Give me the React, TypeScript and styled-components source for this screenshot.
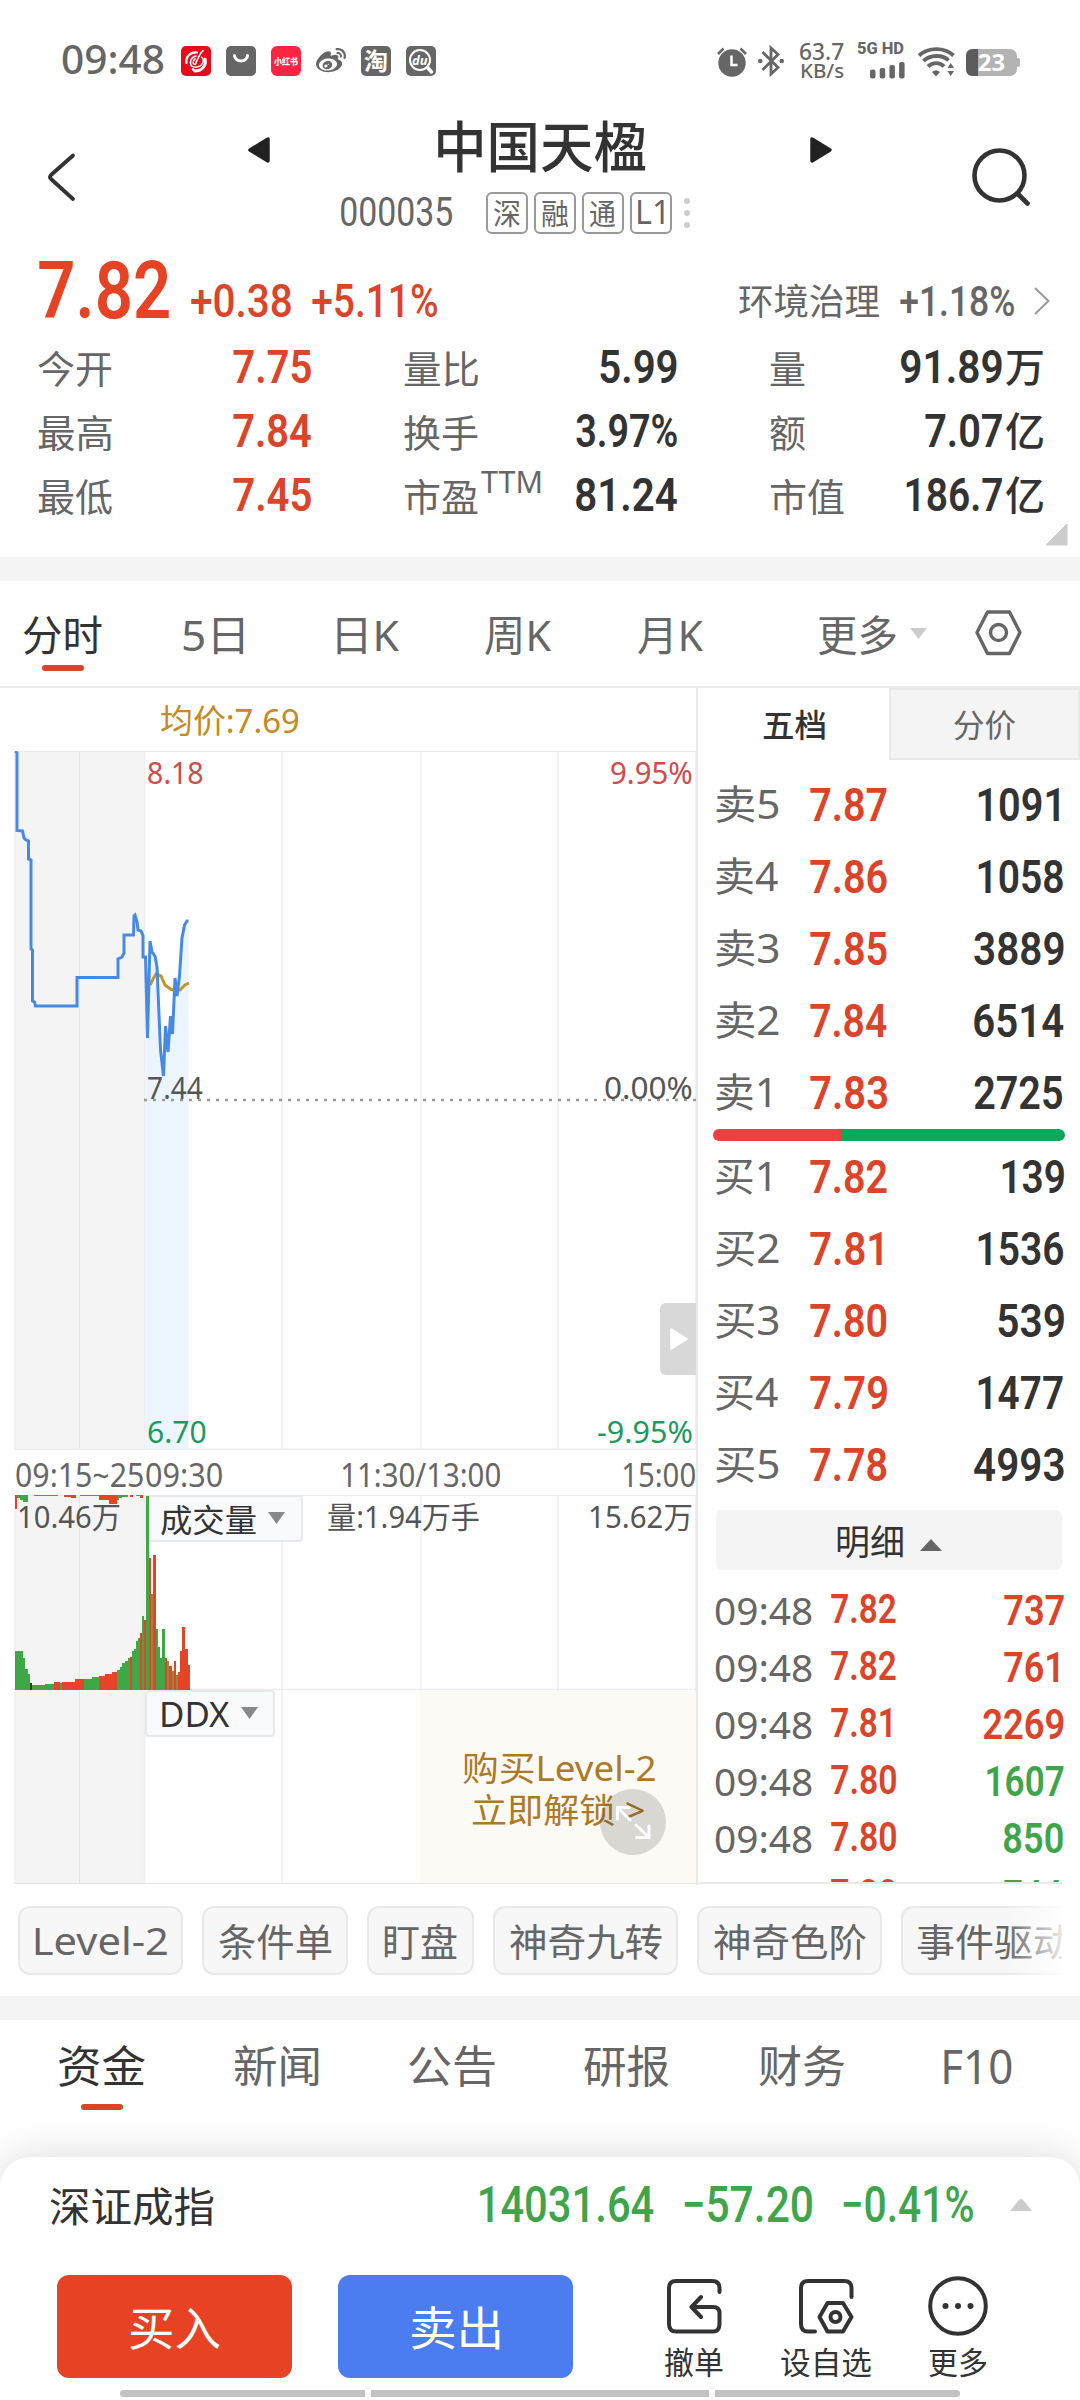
import React, { useLayoutEffect, useRef, useState } from 'react';
import styled, { createGlobalStyle, css } from 'styled-components';
import { FaWeibo } from 'react-icons/fa';

const RED = '#dc4429';
const GREEN = '#3fa54a';
const INK = '#333333';
const GREY = '#666666';
const LINE = '#e9e9e9';

const DIN = 'Roboto, "Noto Sans CJK SC", sans-serif';
const UI = '"Noto Sans", "Noto Sans CJK SC", sans-serif';

const Global = createGlobalStyle`
  * { box-sizing: border-box; }
  body { margin: 0; background: #fff; font-family: ${UI}; }
`;

/* ---------- text fitted to a column width ---------- */

const FitBox = styled.span<{ $w: number; $ml: number; $size: number }>`
  display: block;
  flex: none;
  width: ${(p) => p.$w}px;
  height: ${(p) => p.$size}px;
  margin-left: ${(p) => p.$ml}px;
`;

const FitInner = styled.span<{ $size: number; $weight: number; $din?: boolean; $color: string }>`
  display: block;
  width: max-content;
  white-space: nowrap;
  transform-origin: 0 50%;
  font-family: ${(p) => (p.$din ? DIN : UI)};
  font-size: ${(p) => p.$size}px;
  line-height: ${(p) => p.$size}px;
  font-weight: ${(p) => p.$weight};
  color: ${(p) => p.$color};
`;

type FitProps = {
  children: string;
  w: number;
  size: number;
  ml?: number;
  dy?: number;
  weight?: number;
  din?: boolean;
  color?: string;
};

function Fit({ children, w, size, ml = 0, dy = 0, weight = 400, din, color = GREY }: FitProps) {
  const ref = useRef<HTMLSpanElement>(null);
  const [fit, setFit] = useState({ s: 1, x: 0 });
  useLayoutEffect(() => {
    const ctx = document.createElement('canvas').getContext('2d');
    if (!ctx || !ref.current) return;
    ctx.font = `${weight} ${size}px ${din ? DIN : UI}`;
    const m = ctx.measureText(children);
    const ink = m.actualBoundingBoxLeft + m.actualBoundingBoxRight;
    if (ink > 0) setFit({ s: w / ink, x: m.actualBoundingBoxLeft });
  }, [children, w, size, weight, din]);
  return (
    <FitBox $w={w} $ml={ml} $size={size}>
      <FitInner
        ref={ref}
        $size={size}
        $weight={weight}
        $din={din}
        $color={color}
        style={{ transform: `translateY(${dy}px) scaleX(${fit.s}) translateX(${fit.x}px)` }}
      >
        {children}
      </FitInner>
    </FitBox>
  );
}

/* ---------- shared ---------- */

const Page = styled.div`
  width: 1080px;
  height: 2400px;
  overflow: hidden;
  background: #fff;
  display: flex;
  flex-direction: column;
`;

const Band = styled.div`
  flex: none;
  height: 24px;
  background: #f4f4f4;
`;

const Glyph = styled.svg<{ $ml?: number; $mt?: number }>`
  display: block;
  flex: none;
  overflow: visible;
  margin-left: ${(p) => p.$ml || 0}px;
  margin-top: ${(p) => p.$mt || 0}px;
`;

/* ---------- status bar ---------- */

const StatusBar = styled.header`
  flex: none;
  height: 120px;
  display: flex;
  align-items: center;
  padding-left: 62px;
`;

const AppIcons = styled.div`
  display: flex;
  gap: 15px;
  margin-left: 17px;
  margin-top: 2px;
  color: ${GREY};
`;

const Stack = styled.div<{ $ml: number; $gap?: number }>`
  display: flex;
  flex-direction: column;
  gap: ${(p) => p.$gap || 0}px;
  margin-left: ${(p) => p.$ml}px;
`;

function Status() {
  return (
    <StatusBar>
      <Fit w={102} size={40} weight={500} dy={-1}>09:48</Fit>
      <AppIcons>
        <Glyph width="30" height="30" viewBox="0 0 30 30">
          <rect width="30" height="30" rx="5" fill="#e80a1a" />
          <g fill="none" stroke="#fff" strokeLinecap="round">
            <path d="M16 6.500C9 6 4.500 11 5.500 17" strokeWidth="2.200" />
            <path d="M15 10C10 11 8 16 10.500 20" strokeWidth="1.600" />
            <path d="M22 4.500C18 9 16 14 14.500 18C12 19.500 11 15 14 13" strokeWidth="1.600" />
            <path d="M20.500 11C24 14 22 20 16 21C13.500 21.500 12 21 10.500 20" strokeWidth="1.500" />
            <path d="M24 13C26 19 21 25 14 25L12 23.500" strokeWidth="2.800" />
          </g>
        </Glyph>
        <Glyph width="30" height="30" viewBox="0 0 30 30">
          <rect width="30" height="30" rx="5" fill={GREY} />
          <path d="M8.500 9.500a6.500 5.500 0 0 0 13 0" fill="none" stroke="#fff" strokeWidth="3" strokeLinecap="round" />
        </Glyph>
        <Glyph width="30" height="30" viewBox="0 0 30 30">
          <rect width="30" height="30" rx="6" fill="#fb2442" />
          <text x="15" y="18.500" fontSize="9" fontWeight="900" textAnchor="middle" textLength="24" lengthAdjust="spacingAndGlyphs" fill="#fff" fontFamily="Noto Sans CJK SC">小红书</text>
        </Glyph>
        <FaWeibo size={30} />
        <Glyph width="30" height="30" viewBox="0 0 30 30">
          <rect width="30" height="30" rx="5" fill={GREY} />
          <text x="15" y="24" fontSize="24" fontWeight="700" textAnchor="middle" fill="#fff" fontFamily="Noto Sans CJK SC">淘</text>
        </Glyph>
        <Glyph width="30" height="30" viewBox="0 0 30 30">
          <rect width="30" height="30" rx="5" fill={GREY} />
          <circle cx="14" cy="14" r="10" fill="none" stroke="#fff" strokeWidth="2" />
          <path d="M21.500 21.500L25.500 26" stroke="#fff" strokeWidth="3.500" strokeLinecap="round" />
          <text x="13.700" y="18.500" fontSize="13" fontWeight="700" fontStyle="italic" textAnchor="middle" fill="#fff" fontFamily="Noto Sans">du</text>
        </Glyph>
      </AppIcons>
      <Glyph $ml={281} $mt={3} width="30" height="30" viewBox="0 0 30 30">
        <circle cx="15" cy="16" r="13.700" fill={GREY} />
        <path d="M1 7L6.500 1.500M29 7L23.500 1.500" stroke={GREY} strokeWidth="2.500" />
        <path d="M14.500 8.500V18H20.500" fill="none" stroke="#fff" strokeWidth="2.500" />
      </Glyph>
      <Glyph $ml={11} $mt={2} width="26" height="30" viewBox="0 0 26 30">
        <path d="M4.500 6L20 21.500L13 28V2L20 8.500L4.500 24" fill="none" stroke={GREY} strokeWidth="2.800" />
        <circle cx="2.300" cy="15" r="2.300" fill={GREY} />
        <circle cx="23.700" cy="15" r="2.300" fill={GREY} />
      </Glyph>
      <Stack $ml={16}>
        <Fit w={44} size={23} weight={500} dy={1}>63.7</Fit>
        <Fit w={43} size={19} weight={500} ml={1}>KB/s</Fit>
      </Stack>
      <Stack $ml={13} $gap={4}>
        <Fit w={47} size={17} weight={800} din dy={-1}>5G HD</Fit>
        <Glyph $ml={13} width="35" height="17" viewBox="0 0 35 17">
          <rect x="0" y="7.500" width="5.500" height="9" rx="2" fill={GREY} />
          <rect x="9.700" y="6" width="5.500" height="10.500" rx="2" fill={GREY} />
          <rect x="19.400" y="3" width="5.500" height="13.500" rx="2" fill={GREY} />
          <rect x="29.100" y="0" width="5.500" height="16.500" rx="2" fill={GREY} />
        </Glyph>
      </Stack>
      <Glyph $ml={13} $mt={3} width="37" height="30" viewBox="0 0 37 30">
        <g fill="none" stroke={GREY} strokeWidth="3.900">
          <path d="M1 8.500C10.500 0 26.500 0 35.500 8.500" />
          <path d="M5.500 14C12 7.500 25 7.500 30.500 13.500" />
          <path d="M10 19.500C14.500 15 22 15 26 19.500" />
        </g>
        <path d="M14 25Q18 21.500 22 25L18 29.500Z" fill={GREY} />
        <path d="M29.500 21L32.700 16L36 21ZM29.500 24L32.700 29L36 24Z" fill={GREY} />
      </Glyph>
      <Glyph $ml={11} $mt={5} width="54" height="27" viewBox="0 0 54 27">
        <rect x="0" y="0" width="51" height="27" rx="7" fill="#b3b3b3" />
        <path d="M50 9h2q2 0 2 2v5q0 2-2 2h-2z" fill="#b3b3b3" />
        <path d="M12 0H7Q0 0 0 7V20Q0 27 7 27H12Z" fill="#5c5c5c" />
        <text x="25.500" y="22" fontSize="24" fontWeight="700" textAnchor="middle" fill="#fff" fontFamily="Noto Sans">23</text>
      </Glyph>
    </StatusBar>
  );
}

/* ---------- title ---------- */

const TitleBar = styled.div`
  flex: none;
  height: 130px;
  display: flex;
  align-items: flex-start;
`;

const TitleBlock = styled.div`
  width: 350px;
  margin-left: 71px;
  display: flex;
  flex-direction: column;
`;

const CodeRow = styled.div`
  display: flex;
  align-items: center;
  height: 42px;
  margin-top: 17px;
`;

const Badge = styled.span<{ $first?: boolean }>`
  width: 42px;
  height: 42px;
  flex: none;
  margin-left: ${(p) => (p.$first ? 34 : 6)}px;
  border: 2px solid #999;
  border-radius: 6px;
  display: flex;
  align-items: center;
  justify-content: center;
`;

function Title() {
  return (
    <TitleBar>
      <Glyph $ml={48} $mt={34} width="27" height="46" viewBox="0 0 27 46">
        <path d="M25 1.500L3 21Q1 23 3 25L25 45" fill="none" stroke={INK} strokeWidth="3.800" strokeLinecap="round" />
      </Glyph>
      <Glyph $ml={173} $mt={17} width="22" height="26" viewBox="0 0 22 26">
        <path d="M20 2V24L2 13Z" fill="#222" stroke="#222" strokeWidth="3.500" strokeLinejoin="round" />
      </Glyph>
      <TitleBlock>
        <Fit w={208} size={55} ml={97} weight={500} color={INK} dy={-2}>中国天楹</Fit>
        <CodeRow>
          <Fit w={111} size={40} din weight={450}>000035</Fit>
          <Badge $first><Fit w={26} size={29}>深</Fit></Badge>
          <Badge><Fit w={26} size={29}>融</Fit></Badge>
          <Badge><Fit w={26} size={29}>通</Fit></Badge>
          <Badge><Fit w={26} size={32} dy={-1}>L1</Fit></Badge>
          <Glyph $ml={12} width="6" height="30" viewBox="0 0 6 30" fill="#ccc">
            <circle cx="3" cy="3" r="3" />
            <circle cx="3" cy="15" r="3" />
            <circle cx="3" cy="27" r="3" />
          </Glyph>
        </CodeRow>
      </TitleBlock>
      <Glyph $ml={119} $mt={17} width="22" height="26" viewBox="0 0 22 26">
        <path d="M2 2V24L20 13Z" fill="#222" stroke="#222" strokeWidth="3.500" strokeLinejoin="round" />
      </Glyph>
      <Glyph $ml={140} $mt={28} width="58" height="58" viewBox="0 0 58 58">
        <circle cx="27.500" cy="27.500" r="25" fill="none" stroke={INK} strokeWidth="4.600" />
        <path d="M46 46L55.500 55.500" stroke={INK} strokeWidth="4.600" strokeLinecap="round" />
      </Glyph>
    </TitleBar>
  );
}

/* ---------- quote ---------- */

const QuoteRow = styled.div`
  flex: none;
  height: 84px;
  display: flex;
  align-items: center;
  padding-left: 39px;
`;

const StatsGrid = styled.div`
  flex: none;
  height: 223px;
  padding-left: 38px;
  position: relative;
  display: grid;
  grid-template-columns: repeat(3, 273px);
  grid-auto-rows: 64px;
  column-gap: 93px;
`;

const Stat = styled.div`
  display: flex;
  align-items: center;
`;

const Corner = styled.svg`
  position: absolute;
  left: 1045px;
  top: 189px;
`;

const Push = styled.span`
  flex: 1;
`;

type StatDef = { label: string; lw: number; value: string; vw: number; unit?: string; up?: boolean; sup?: boolean };

const stats: StatDef[] = [
  { label: '今开', lw: 74, value: '7.75', vw: 78, up: true },
  { label: '量比', lw: 74, value: '5.99', vw: 77 },
  { label: '量', lw: 35, value: '91.89', vw: 101, unit: '万' },
  { label: '最高', lw: 74, value: '7.84', vw: 78, up: true },
  { label: '换手', lw: 74, value: '3.97%', vw: 101 },
  { label: '额', lw: 35, value: '7.07', vw: 77, unit: '亿' },
  { label: '最低', lw: 74, value: '7.45', vw: 78, up: true },
  { label: '市盈', lw: 74, value: '81.24', vw: 101, sup: true },
  { label: '市值', lw: 74, value: '186.7', vw: 96, unit: '亿' },
];

function Quote() {
  return (
    <>
      <QuoteRow>
        <Fit w={130} size={80} din weight={600} color="#e64325" dy={-1}>7.82</Fit>
        <Fit w={100} size={46} ml={22} din weight={500} color={RED} dy={9}>+0.38</Fit>
        <Fit w={125} size={46} ml={21} din weight={500} color={RED} dy={9}>+5.11%</Fit>
        <Fit w={140} size={36} ml={302} dy={10}>环境治理</Fit>
        <Fit w={114} size={43} ml={21} din weight={500} dy={9}>+1.18%</Fit>
        <Glyph $ml={20} $mt={18} width="16" height="28" viewBox="0 0 16 28">
          <path d="M1 1L14.500 14L1 27" fill="none" stroke="#999" strokeWidth="2" />
        </Glyph>
      </QuoteRow>
      <StatsGrid>
        {stats.map((s) => (
          <Stat key={s.label}>
            <Fit w={s.lw} size={38} dy={2}>{s.label}</Fit>
            {s.sup && <Fit w={60} size={31} ml={3} dy={-13}>TTM</Fit>}
            <Push />
            <Fit w={s.vw} size={47} din weight={600} color={s.up ? RED : INK}>{s.value}</Fit>
            {s.unit && <Fit w={37} size={40} ml={4} weight={500} color={INK} dy={1}>{s.unit}</Fit>}
          </Stat>
        ))}
        <Corner width="23" height="23" viewBox="0 0 23 23">
          <path d="M22 1V22H1Z" fill="#ccc" stroke="#ccc" strokeLinejoin="round" />
        </Corner>
      </StatsGrid>
    </>
  );
}

/* ---------- period tabs ---------- */

const Periods = styled.nav`
  flex: none;
  height: 107px;
  display: flex;
  border-bottom: 2px solid ${LINE};
`;

const Tab = styled.div<{ $ml: number; $pt: number }>`
  display: flex;
  flex-direction: column;
  align-items: center;
  margin-left: ${(p) => p.$ml}px;
  padding-top: ${(p) => p.$pt}px;
`;

const Underline = styled.i<{ $mt: number }>`
  width: 42px;
  height: 6px;
  margin-top: ${(p) => p.$mt}px;
  border-radius: 3px;
  background: ${RED};
`;

function PeriodTabs() {
  return (
    <Periods>
      <Tab $ml={23} $pt={33}>
        <Fit w={79} size={42} color={INK}>分时</Fit>
        <Underline $mt={9} />
      </Tab>
      <Tab $ml={81} $pt={33}><Fit w={60} size={42}>5日</Fit></Tab>
      <Tab $ml={94} $pt={33}><Fit w={62} size={42}>日K</Fit></Tab>
      <Tab $ml={86} $pt={33}><Fit w={66} size={42}>周K</Fit></Tab>
      <Tab $ml={87} $pt={33}><Fit w={65} size={42}>月K</Fit></Tab>
      <Tab $ml={115} $pt={33}><Fit w={78} size={42}>更多</Fit></Tab>
      <Glyph $ml={14} $mt={47} width="17" height="11" viewBox="0 0 17 11">
        <path d="M0 0H17L8.500 11Z" fill="#ccc" />
      </Glyph>
      <Glyph $ml={48} $mt={29} width="47" height="46" viewBox="0 0 47 46">
        <path d="M12.500 2H34.500L45 22.500L34.500 43.500H12.500L2 22.500Z" fill="none" stroke={GREY} strokeWidth="3.400" strokeLinejoin="round" />
        <circle cx="23.500" cy="22.500" r="8" fill="none" stroke={GREY} strokeWidth="3.400" />
      </Glyph>
    </Periods>
  );
}

/* ---------- charts ---------- */

const Main = styled.section`
  flex: none;
  height: 1197px;
  display: flex;
`;

const ChartCol = styled.div`
  width: 698px;
  flex: none;
  border-right: 2px solid ${LINE};
  display: flex;
  flex-direction: column;
`;

const AvgRow = styled.div`
  height: 63px;
  display: flex;
  align-items: center;
  padding-left: 161px;
`;

const Plot = styled.div<{ $h: number }>`
  position: relative;
  height: ${(p) => p.$h}px;
`;

const PlotArt = styled.svg`
  position: absolute;
  inset: 0;
`;

const Labels = styled.div`
  position: absolute;
  inset: 0;
  display: flex;
  flex-direction: column;
  justify-content: space-between;
`;

const LabelLine = styled.div<{ $top?: number; $bottom?: number }>`
  display: flex;
  justify-content: space-between;
  padding: ${(p) => p.$top || 0}px 4px ${(p) => p.$bottom || 0}px 148px;
`;

const Handle = styled.div`
  position: absolute;
  right: 0;
  top: 552px;
  width: 36px;
  height: 72px;
  border-radius: 6px 0 0 6px;
  background: #d8d8d8;
  display: flex;
  align-items: center;
  justify-content: center;
`;

const TimeRow = styled.div`
  height: 45px;
  display: flex;
  align-items: center;
  padding-left: 16px;
`;

const PanelHead = styled.div`
  position: relative;
  display: flex;
  align-items: center;
  height: 47px;
`;

const Picker = styled.div<{ $w: number; $ml: number }>`
  width: ${(p) => p.$w}px;
  height: 47px;
  flex: none;
  margin-left: ${(p) => p.$ml}px;
  border: 2px solid ${LINE};
  border-radius: 4px;
  background: #f9fafe;
  display: flex;
  align-items: center;
`;

const LockPanel = styled.div`
  position: absolute;
  left: 420px;
  right: 0;
  top: 1px;
  bottom: 1px;
  background: #fcfaf5;
  padding-top: 60px;
`;

const Zoom = styled.div`
  position: absolute;
  left: 180px;
  top: 98px;
  width: 66px;
  height: 66px;
  border-radius: 50%;
  background: rgba(40, 40, 40, 0.17);
`;

const priceLine: [number, number][] = [
  [15.5, 751], [17, 753], [17, 830.5], [22.5, 831], [24, 838], [26, 840], [28.5, 841], [28.5, 859], [31, 860],
  [31, 949], [32.5, 950], [32.5, 1001], [34.5, 1002], [35.5, 1006], [77, 1006], [77, 977.5], [118, 977.5],
  [118, 959], [122, 957], [124, 953], [124, 935], [133.5, 935], [134, 916], [135, 915], [137, 922], [138, 930],
  [141, 931], [143, 935.5], [143, 957], [145.5, 957], [147.5, 1038], [150, 941], [152, 952], [155, 956],
  [157, 967], [160.5, 1050], [163.5, 1076], [165.5, 1026], [168, 1052], [170.5, 1016], [172.5, 1034],
  [175, 978], [177, 996], [179.5, 976], [182, 938], [184.5, 925], [187, 921], [188.5, 921],
];
const toPoints = (pts: [number, number][]) => pts.map((p) => p.join(',')).join(' ');
const fillPoints = `${toPoints(priceLine.filter((p) => p[0] >= 145))} 188.500,1449 145.500,1449`;

const OLIVE = '#91893c';
const BR = '#e54527';
const BG = '#3fa846';
const bars: [number, number, number, string][] = [
  [15, 22.5, 1651, BG], [22.5, 24.5, 1658, BG], [24.5, 28, 1669, BG], [28, 30, 1674, BG], [29.5, 31.5, 1683, '#1d4a22'],
  [31.5, 45, 1684.5, BG], [45, 54, 1683.5, BG], [54, 60, 1682, BR], [60, 62, 1682.5, BG], [62, 75, 1681.5, BR],
  [75, 84, 1679, BR], [84, 92, 1678.5, BG], [92, 99, 1677, BG], [99, 105, 1675.5, BR], [105, 112, 1674, BR],
  [112, 117, 1672, BR], [117, 120, 1670, BG], [120, 122, 1667, BG], [122, 125, 1663, BG], [125, 128, 1661, BG],
  [128, 130, 1658, BG], [130, 132, 1656.5, BR], [132, 134, 1651, BG], [134, 136, 1649, BG], [136, 138, 1641, BG],
  [138, 140, 1638, BG], [140, 142, 1633, BR], [142, 144, 1616, BG], [144, 146, 1620, BR], [146, 149, 1496, BG],
  [149, 151, 1558, BR], [151, 153.2, 1594, OLIVE], [153.2, 155.7, 1555, BR], [155.7, 158, 1629, BG],
  [158, 160, 1647, BG], [160, 162, 1658, BG], [162, 165, 1629, BG], [165, 167, 1658, BR], [167, 169, 1661, OLIVE],
  [169, 171.5, 1666, BR], [171.5, 173.5, 1671, OLIVE], [173.5, 176, 1661, BR], [176, 178, 1675, OLIVE],
  [178, 180, 1672, BR], [180, 182.3, 1651, BR], [182.3, 185, 1627, BR], [185, 187.5, 1649, BR], [187.5, 190, 1665, BR],
];
const hanging: [number, number, number, string][] = [
  [15, 17, 1509, BR], [17, 20, 1498, BG], [20, 23, 1500, BG], [23, 28, 1502, BG], [34, 58, 1496, BG], [64, 71, 1496.5, BR], [71, 76, 1498, BR],
  [80, 99, 1496, BG], [99, 109, 1500, BR], [109, 117, 1504, BR], [117, 119, 1500, BG], [119, 122, 1498, BG], [122, 128, 1496.5, BG],
  [130, 133, 1496.5, BR], [136, 140, 1496, BG], [140, 143, 1498, BR],
];

const Grid = ({ y1, y2 }: { y1: number; y2: number }) => (
  <>
    <rect x="14.500" y={y1} width="130" height={y2 - y1} fill="#f4f4f4" />
    {[15, 144.5, 282, 421, 558].map((x) => (
      <line key={x} x1={x} x2={x} y1={y1} y2={y2} stroke="#efefef" strokeWidth="1.500" />
    ))}
    <line x1="79.500" x2="79.500" y1={y1} y2={y2} stroke="#e6e6e6" />
    <line x1="695.500" x2="695.500" y1={y1} y2={y2} stroke="#efefef" />
  </>
);

function Charts() {
  return (
    <ChartCol>
      <AvgRow><Fit w={138} size={33} dy={1} color="#c58a20">均价:7.69</Fit></AvgRow>
      <Plot $h={699}>
        <PlotArt width="696" height="699" viewBox="0 751 696 699">
          <Grid y1={751} y2={1450} />
          <line x1="14" x2="696" y1="751.500" y2="751.500" stroke="#e9e9e9" />
          <line x1="14" x2="696" y1="1449.300" y2="1449.300" stroke="#ececec" strokeWidth="1.500" />
          <polygon points={fillPoints} fill="#ecf4fd" />
          <polyline points="150,985 153,979 156,974 161,976 165,985 171,989.500 180,990 185,985 189,983" fill="none" stroke="#c6902a" strokeWidth="3" />
          <line x1="144" x2="696" y1="1100" y2="1100" stroke="#999" strokeWidth="2.500" strokeDasharray="3 6" />
          <polyline points={toPoints(priceLine)} fill="none" stroke="#478ae3" strokeWidth="3" />
        </PlotArt>
        <Labels>
          <LabelLine $top={6}>
            <Fit w={55} size={31} color="#d14b49">8.18</Fit>
            <Fit w={81} size={31} color="#d14b49">9.95%</Fit>
          </LabelLine>
          <LabelLine $bottom={29}>
            <Fit w={55} size={31} color="#555">7.44</Fit>
            <Fit w={87} size={31} color="#555">0.00%</Fit>
          </LabelLine>
          <LabelLine $bottom={3}>
            <Fit w={58} size={31} color="#1d9a5b">6.70</Fit>
            <Fit w={94} size={31} color="#1d9a5b">-9.95%</Fit>
          </LabelLine>
        </Labels>
        <Handle>
          <Glyph $ml={1} width="18" height="22" viewBox="0 0 18 22">
            <path d="M1 1V21L17 11Z" fill="#fff" stroke="#fff" strokeWidth="1.500" strokeLinejoin="round" />
          </Glyph>
        </Handle>
      </Plot>
      <TimeRow>
        <Fit w={127} size={32} dy={2}>09:15~25</Fit>
        <Fit w={76} size={32} ml={3} dy={2}>09:30</Fit>
        <Fit w={158} size={32} ml={120} dy={2}>11:30/13:00</Fit>
        <Fit w={72} size={32} ml={123} dy={2}>15:00</Fit>
      </TimeRow>
      <Plot $h={195}>
        <PlotArt width="696" height="195" viewBox="0 1495 696 195">
          <Grid y1={1495} y2={1690} />
          <line x1="14" x2="696" y1="1495.500" y2="1495.500" stroke="#ececec" />
          <line x1="14" x2="696" y1="1689.500" y2="1689.500" stroke="#ececec" strokeWidth="1.500" />
        </PlotArt>
        <PanelHead>
          <Fit w={101} size={30} ml={19} dy={-2} color="#555">10.46万</Fit>
          <Picker $w={158} $ml={25}>
            <Fit w={95} size={32} ml={14} dy={1} color={INK}>成交量</Fit>
            <Glyph $ml={12} $mt={-2} width="17" height="12" viewBox="0 0 17 12">
              <path d="M0 0H17L8.500 12Z" fill="#888" />
            </Glyph>
          </Picker>
          <Fit w={151} size={30} ml={25} dy={-2} color="#555">量:1.94万手</Fit>
          <Fit w={102} size={30} ml={111} dy={-2} color="#555">15.62万</Fit>
        </PanelHead>
        <PlotArt width="696" height="195" viewBox="0 1495 696 195" shapeRendering="crispEdges">
          {bars.map(([a, b, y, c]) => <rect key={a} x={a} y={y} width={b - a} height={1690 - y} fill={c} />)}
          {hanging.map(([a, b, y, c]) => <rect key={a} x={a} y={1495} width={b - a} height={y - 1495} fill={c} />)}
        </PlotArt>
      </Plot>
      <Plot $h={194}>
        <PlotArt width="696" height="194" viewBox="0 1690 696 194">
          <Grid y1={1690} y2={1884} />
          <line x1="14" x2="696" y1="1883.500" y2="1883.500" stroke="#e6e6e6" />
        </PlotArt>
        <PanelHead>
          <Picker $w={130} $ml={145}>
            <Fit w={68} size={35} ml={15} dy={0} color={INK}>DDX</Fit>
            <Glyph $ml={11} $mt={-2} width="17" height="12" viewBox="0 0 17 12">
              <path d="M0 0H17L8.500 12Z" fill="#888" />
            </Glyph>
          </Picker>
        </PanelHead>
        <LockPanel>
          <Fit w={192} size={34} ml={43} color="#ad7926">购买Level-2</Fit>
          <Fit w={172} size={34} ml={52} dy={8} color="#ad7926">立即解锁 &gt;</Fit>
          <Zoom>
            <Glyph width="66" height="66" viewBox="0 0 66 66">
              <path d="M17.500 30V18.500H29M18 19L30 31M36 36L48 47.500M49 37V48.500H36.500" fill="none" stroke="#fff" strokeWidth="3" strokeLinecap="round" />
            </Glyph>
          </Zoom>
        </LockPanel>
      </Plot>
    </ChartCol>
  );
}

/* ---------- order book ---------- */

const Book = styled.aside`
  flex: 1;
  display: flex;
  flex-direction: column;
`;

const BookTabs = styled.div`
  display: grid;
  grid-template-columns: 191px 191px;
  height: 72px;
  flex: none;
  margin-bottom: 9px;
`;

const BookTab = styled.div<{ $idle?: boolean }>`
  display: flex;
  align-items: center;
  justify-content: center;
  padding-top: 2px;
  ${(p) => p.$idle && css`
    background: #f4f4f4;
    border: 2px solid ${LINE};
  `}
`;

const Level = styled.div`
  height: 72px;
  flex: none;
  display: flex;
  align-items: center;
  padding-left: 18px;
`;

const Ratio = styled.div`
  flex: none;
  height: 12px;
  width: 352px;
  margin-left: 15px;
  border-radius: 6px;
  background: linear-gradient(90deg, #f23e40 128px, #0ba85b 128px);
`;

const DetailButton = styled.div`
  flex: none;
  width: 346px;
  height: 60px;
  margin: 9px 0 10px 18px;
  border-radius: 6px;
  background: #f4f4f4;
  display: flex;
  align-items: center;
`;

const Ticks = styled.div`
  flex: 1;
  min-height: 0;
  overflow: hidden;
`;

const Rule = styled.div`
  flex: none;
  width: 364px;
  height: 2px;
  margin-bottom: 1px;
  background: ${LINE};
`;

const Tick = styled.div`
  height: 57px;
  display: flex;
  align-items: center;
  padding-left: 17px;
`;

type Lv = [string, string, string, number, number];
const asks: Lv[] = [
  ['卖5', '7.87', '1091', 978, 1059],
  ['卖4', '7.86', '1058', 978, 1063.5],
  ['卖3', '7.85', '3889', 974, 1063.5],
  ['卖2', '7.84', '6514', 974, 1064],
  ['卖1', '7.83', '2725', 974, 1062.5],
];
const bids: Lv[] = [
  ['买1', '7.82', '139', 1001.5, 1063.5],
  ['买2', '7.81', '1536', 978, 1063.5],
  ['买3', '7.80', '539', 997.5, 1063.5],
  ['买4', '7.79', '1477', 978, 1063],
  ['买5', '7.78', '4993', 974, 1063.5],
];
const ticks: [string, string, number, number, boolean][] = [
  ['7.82', '737', 1003.5, 1063.5, true],
  ['7.82', '761', 1003.5, 1058, true],
  ['7.81', '2269', 982.5, 1063.5, true],
  ['7.80', '1607', 987, 1063.5, false],
  ['7.80', '850', 1004, 1063, false],
  ['7.80', '744', 1004, 1062, false],
];

function LevelRow({ row }: { row: Lv }) {
  const [label, price, vol, a, b] = row;
  const lw = label.endsWith('1') ? 54 : 62.5;
  const pw = price.endsWith('1') ? 72 : 77;
  return (
    <Level>
      <Fit w={lw} size={40} dy={-1}>{label}</Fit>
      <Fit w={pw} size={46} ml={810 - 716 - lw} din weight={600} color={RED}>{price}</Fit>
      <Fit w={b - a} size={46} ml={a - 810 - pw} din weight={600} color={INK}>{vol}</Fit>
    </Level>
  );
}

function OrderBook() {
  return (
    <Book>
      <BookTabs>
        <BookTab><Fit w={62} size={32} weight={500} color={INK}>五档</Fit></BookTab>
        <BookTab $idle><Fit w={62} size={32}>分价</Fit></BookTab>
      </BookTabs>
      {asks.map((r) => <LevelRow key={r[0]} row={r} />)}
      <Ratio />
      {bids.map((r) => <LevelRow key={r[0]} row={r} />)}
      <DetailButton>
        <Fit w={66} size={35} ml={121} dy={1} color={INK}>明细</Fit>
        <Glyph $ml={17} $mt={10} width="22" height="12" viewBox="0 0 22 12">
          <path d="M0 12H22L11 0Z" fill={GREY} />
        </Glyph>
      </DetailButton>
      <Ticks>
        {ticks.map(([p, v, a, b, up], i) => {
          const pw = p.endsWith('1') ? 60 : 65;
          return (
            <Tick key={i}>
              <Fit w={97} size={39} dy={1}>09:48</Fit>
              <Fit w={pw} size={40} ml={19} din weight={600} color={RED} dy={1}>{p}</Fit>
              <Fit w={b - a} size={43} ml={a - 831 - pw} din weight={600} color={up ? RED : GREEN} dy={2}>{v}</Fit>
            </Tick>
          );
        })}
      </Ticks>
      <Rule />
    </Book>
  );
}

/* ---------- chips and news tabs ---------- */

const Chips = styled.div`
  flex: none;
  height: 111px;
  width: 1062px;
  overflow: hidden;
  position: relative;
  display: flex;
  gap: 19px;
  padding: 21px 0 0 18px;
`;

const Chip = styled.div<{ $w: number }>`
  flex: none;
  width: ${(p) => p.$w}px;
  height: 69px;
  border: 2px solid ${LINE};
  border-radius: 12px;
  background: #f7f7f7;
  display: flex;
  align-items: center;
  justify-content: center;
`;

const Fade = styled.div`
  position: absolute;
  right: 0;
  top: 0;
  width: 56px;
  height: 111px;
  background: linear-gradient(90deg, rgba(255, 255, 255, 0), rgba(255, 255, 255, 0.85));
`;

const NewsTabs = styled.nav`
  flex: none;
  height: 137px;
  display: flex;
`;

function Lower() {
  return (
    <>
      <Chips>
        <Chip $w={165}><Fit w={132} size={38} dy={-1}>Level-2</Fit></Chip>
        <Chip $w={146}><Fit w={113} size={38}>条件单</Fit></Chip>
        <Chip $w={107}><Fit w={73} size={38}>盯盘</Fit></Chip>
        <Chip $w={185}><Fit w={152} size={38}>神奇九转</Fit></Chip>
        <Chip $w={185}><Fit w={152} size={38}>神奇色阶</Fit></Chip>
        <Chip $w={185}><Fit w={153} size={38}>事件驱动</Fit></Chip>
        <Fade />
      </Chips>
      <Band />
      <NewsTabs>
        <Tab $ml={59} $pt={24}>
          <Fit w={86} size={44} color={INK}>资金</Fit>
          <Underline $mt={16} />
        </Tab>
        <Tab $ml={89} $pt={24}><Fit w={85} size={44}>新闻</Fit></Tab>
        <Tab $ml={90} $pt={24}><Fit w={86} size={44}>公告</Fit></Tab>
        <Tab $ml={89} $pt={24}><Fit w={85} size={44}>研报</Fit></Tab>
        <Tab $ml={90} $pt={24}><Fit w={86} size={44}>财务</Fit></Tab>
        <Tab $ml={99} $pt={24}><Fit w={68} size={48} dy={-2}>F10</Fit></Tab>
      </NewsTabs>
    </>
  );
}

/* ---------- bottom sheet ---------- */

const Sheet = styled.footer`
  flex: none;
  height: 243px;
  position: relative;
  background: #fff;
  border-radius: 30px 30px 0 0;
  box-shadow: 0 0 44px rgba(0, 0, 0, 0.15);
  display: flex;
  flex-direction: column;
`;

const IndexRow = styled.div`
  height: 98px;
  display: flex;
  align-items: center;
  padding-left: 50px;
`;

const Actions = styled.div`
  display: flex;
  margin-top: 20px;
  height: 115px;
  padding-left: 57px;
`;

const TradeButton = styled.button<{ $bg: string; $ml?: number }>`
  width: 235px;
  height: 103px;
  border: 0;
  padding: 0;
  margin-left: ${(p) => p.$ml || 0}px;
  border-radius: 12px;
  background: ${(p) => p.$bg};
  display: flex;
  align-items: center;
  justify-content: center;
`;

const Tool = styled.div<{ $ml: number; $w: number }>`
  width: ${(p) => p.$w}px;
  margin-left: ${(p) => p.$ml}px;
  display: flex;
  flex-direction: column;
  align-items: center;
`;

const HomeBar = styled.div`
  display: grid;
  grid-template-columns: 245px 338px 245px;
  column-gap: 6px;
  margin-left: 120px;
  height: 7px;
  width: 840px;
  border-radius: 4px;
  overflow: hidden;
`;

const HomeSegment = styled.span`
  background: #c2c2c2;
`;

function Bottom() {
  return (
    <Sheet>
      <IndexRow>
        <Fit w={164} size={41} color={INK}>深证成指</Fit>
        <Fit w={174} size={50} ml={266} din weight={500} color={GREEN} dy={-1}>14031.64</Fit>
        <Fit w={128} size={50} ml={30} din weight={500} color={GREEN} dy={-1}>−57.20</Fit>
        <Fit w={130} size={50} ml={31} din weight={500} color={GREEN} dy={-1}>−0.41%</Fit>
        <Glyph $ml={37} $mt={-2} width="22" height="12" viewBox="0 0 22 12">
          <path d="M1 11.500L9 1.500Q11 -.5 13 1.500L21 11.500Z" fill="#ccc" stroke="#ccc" strokeLinejoin="round" />
        </Glyph>
      </IndexRow>
      <Actions>
        <TradeButton $bg="#e74224"><Fit w={90} size={46} color="#fff">买入</Fit></TradeButton>
        <TradeButton $bg="#4b7df1" $ml={46}><Fit w={89} size={46} color="#fff">卖出</Fit></TradeButton>
        <Tool $ml={82} $w={78}>
          <Glyph $mt={4} width="55" height="55" viewBox="0 0 55 55" fill="none" stroke={INK} strokeWidth="4" strokeLinecap="round" strokeLinejoin="round">
            <path d="M52.500 13V9Q52.500 2 45 2H9Q2 2 2 9V45Q2 52.500 9 52.500H46Q52.500 52.500 52.500 45V34Q52.500 28 46 28H25M34 18L24.500 28L34 38" />
          </Glyph>
          <Fit w={58} size={31} dy={13} color={INK}>撤单</Fit>
        </Tool>
        <Tool $ml={43} $w={100}>
          <Glyph $mt={4} width="55" height="55" viewBox="0 0 55 55" fill="none" stroke={INK} strokeWidth="4" strokeLinecap="round" strokeLinejoin="round">
            <path d="M52.500 18V9Q52.500 2 45 2H9Q2 2 2 9V45Q2 52.500 9 52.500H16" />
            <path d="M28.500 24H44L52.500 38L44 52.500H28.500L20.500 38Z" />
            <circle cx="36.500" cy="38" r="5" />
          </Glyph>
          <Fit w={90} size={31} dy={13} color={INK}>设自选</Fit>
        </Tool>
        <Tool $ml={42} $w={80}>
          <Glyph $mt={1} width="60" height="60" viewBox="0 0 60 60" fill={INK}>
            <circle cx="30" cy="30" r="27.800" fill="none" stroke={INK} strokeWidth="4" />
            <circle cx="17.500" cy="30" r="3" />
            <circle cx="30" cy="30" r="3" />
            <circle cx="42.500" cy="30" r="3" />
          </Glyph>
          <Fit w={58} size={31} dy={11} color={INK}>更多</Fit>
        </Tool>
      </Actions>
      <HomeBar><HomeSegment /><HomeSegment /><HomeSegment /></HomeBar>
    </Sheet>
  );
}

export default function App() {
  return (
    <Page>
      <Global />
      <Status />
      <Title />
      <Quote />
      <Band />
      <PeriodTabs />
      <Main>
        <Charts />
        <OrderBook />
      </Main>
      <Lower />
      <Bottom />
    </Page>
  );
}
